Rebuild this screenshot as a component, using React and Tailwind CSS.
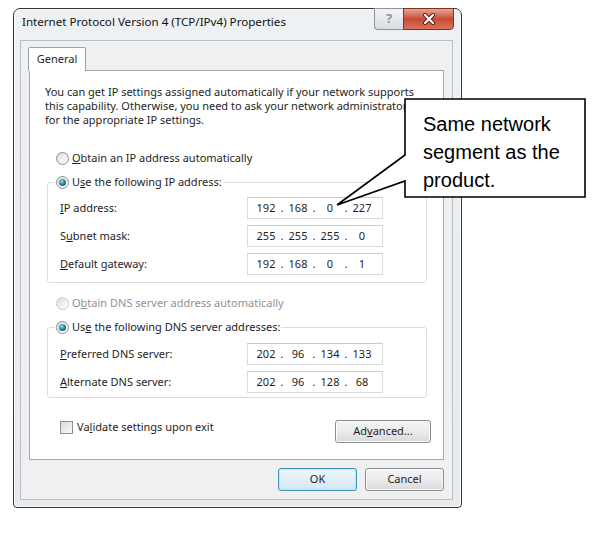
import React from "react";

const ui = "font-['Noto_Sans',sans-serif] text-[11px] text-[#1e1e1e]";

function Radio({ checked, disabled }) {
  return (
    <span
      className={`inline-flex w-[13px] h-[13px] shrink-0 items-center justify-center rounded-full border ${
        disabled ? "border-[#c9cbcd]" : "border-[#8a8d90]"
      } bg-linear-to-br from-[#d6d8da] via-[#f0f0f0] to-[#ffffff]`}
    >
      {checked && (
        <span className="w-[7px] h-[7px] rounded-full bg-[radial-gradient(circle_at_40%_35%,#8fe0f4,#1f7595_55%,#123f57)]" />
      )}
    </span>
  );
}

function IpField({ parts }) {
  return (
    <div className="w-[136px] h-[22px] flex items-center pl-[6px] bg-white border border-[#d9dbdd] border-t-[#c9cbce]">
      {parts.map((p, i) => (
        <React.Fragment key={i}>
          {i > 0 && <span className="w-[8px] text-center">.</span>}
          <span className="w-[24px] text-center">{p}</span>
        </React.Fragment>
      ))}
    </div>
  );
}

function Row({ label, parts }) {
  return (
    <div className="flex items-center pl-[12px]">
      <span className="w-[187px]">{label}</span>
      <IpField parts={parts} />
    </div>
  );
}

function Button({ children, primary, className = "" }) {
  return (
    <div
      className={`h-[23px] flex items-center justify-center rounded-[3px] border ${
        primary
          ? "border-[#3d95c4] bg-linear-to-b from-[#f1f8fc] to-[#d2e6f1] shadow-[inset_0_0_0_1px_#bfe6f8]"
          : "border-[#8a8d90] bg-linear-to-b from-[#f4f4f4] via-[#ebebeb] to-[#d9d9d9] shadow-[inset_0_0_0_1px_#fbfbfb]"
      } ${className}`}
    >
      {children}
    </div>
  );
}

export default function App() {
  return (
    <div className={`relative w-[609px] h-[548px] bg-white overflow-hidden pt-[8px] pl-[13px] ${ui}`}>
      {/* dialog */}
      <div className="relative w-[449px] h-[500px] flex flex-col border border-[#333638] rounded-t-[7px] rounded-b-[4px] bg-linear-to-b from-[#eef1f4] to-[#e8ebee] shadow-[inset_0_0_0_1px_#fafbfc]">
        <div className="h-[31px] pl-[8px] pt-[6px] leading-[14px] text-[11.6px] text-[#111]">
          Internet Protocol Version 4 (TCP/IPv4) Properties
        </div>

        <div className="absolute -top-px right-[7px] flex h-[22px]">
          <div className="w-[29px] flex items-center justify-center rounded-bl-[4px] border border-[#8e959c] border-r-0 bg-linear-to-b from-[#f3f4f6] to-[#d9dde1] font-bold text-[13px] text-[#8a949e]">
            ?
          </div>
          <div className="w-[51px] flex items-center justify-center rounded-br-[4px] border border-[#7a3226] bg-linear-to-b from-[#e6a595] via-[#c64a35] to-[#d9735c]">
            <svg width="14" height="12" viewBox="0 0 14 12">
              <path d="M3 2 L11 10 M11 2 L3 10" stroke="#5b1c12" strokeWidth="4" strokeLinecap="round" />
              <path d="M3 2 L11 10 M11 2 L3 10" stroke="#ffffff" strokeWidth="2.2" strokeLinecap="round" />
            </svg>
          </div>
        </div>

        {/* inner frame */}
        <div className="flex-1 ml-[6px] mr-[8px] mb-[7px] border border-[#b7bec5] bg-[#f0f0f0] pl-[8px] pr-[8px] pt-[6px]">
          <div className="flex">
            <div className="relative z-10 -ml-px -mb-px w-[58px] h-[24px] flex items-center justify-center border border-b-0 border-[#9aa1a9] bg-white rounded-t-[2px]">
              General
            </div>
          </div>

          <div className="h-[390px] border border-[#a3aab2] bg-white pl-[15px] pr-[12px] pt-[14px]">
            <p className="leading-[14px] whitespace-nowrap">
              You can get IP settings assigned automatically if your network supports
              <br />
              this capability. Otherwise, you need to ask your network administrator
              <br />
              for the appropriate IP settings.
            </p>

            <div className="mt-[23px] ml-[11px] h-[16px] flex items-center gap-[3px]">
              <Radio />
              <span>
                <span className="underline">O</span>btain an IP address automatically
              </span>
            </div>

            <fieldset className="mt-[8px] ml-[2px] w-[380px] border border-[#d6dee4] rounded-[3px] pt-[7px] pb-[7px]">
              <legend className="ml-[7px] px-[1px] bg-white">
                <span className="h-[16px] flex items-center gap-[3px]">
                  <Radio checked />
                  <span>
                    U<span className="underline">s</span>e the following IP address:
                  </span>
                </span>
              </legend>
              <div className="flex flex-col gap-[6px]">
                <Row label={<><span className="underline">I</span>P address:</>} parts={["192", "168", "0", "227"]} />
                <Row label={<>S<span className="underline">u</span>bnet mask:</>} parts={["255", "255", "255", "0"]} />
                <Row label={<><span className="underline">D</span>efault gateway:</>} parts={["192", "168", "0", "1"]} />
              </div>
            </fieldset>

            <div className="mt-[12px] ml-[11px] h-[16px] flex items-center gap-[3px] text-[#8f9194]">
              <Radio disabled />
              <span>
                O<span className="underline">b</span>tain DNS server address automatically
              </span>
            </div>

            <fieldset className="mt-[8px] ml-[2px] w-[380px] border border-[#d6dee4] rounded-[3px] pt-[8px] pb-[4px]">
              <legend className="ml-[7px] px-[1px] bg-white">
                <span className="h-[16px] flex items-center gap-[3px]">
                  <Radio checked />
                  <span>
                    Us<span className="underline">e</span> the following DNS server addresses:
                  </span>
                </span>
              </legend>
              <div className="flex flex-col gap-[6px]">
                <Row label={<><span className="underline">P</span>referred DNS server:</>} parts={["202", "96", "134", "133"]} />
                <Row label={<><span className="underline">A</span>lternate DNS server:</>} parts={["202", "96", "128", "68"]} />
              </div>
            </fieldset>

            <div className="mt-[23px] flex items-start justify-between">
              <div className="ml-[15px] h-[13px] flex items-center gap-[4px]">
                <span className="w-[13px] h-[13px] border border-[#8f9296] bg-linear-to-br from-[#d8d9db] to-[#fbfbfb]" />
                <span>
                  Va<span className="underline">l</span>idate settings upon exit
                </span>
              </div>
              <Button className="w-[96px] -mt-px">
                Ad<span className="underline">v</span>anced...
              </Button>
            </div>
          </div>

          <div className="mt-[8px] flex justify-end gap-[8px]">
            <Button primary className="w-[79px]">OK</Button>
            <Button className="w-[79px]">Cancel</Button>
          </div>
        </div>
      </div>

      {/* callout */}
      <svg className="absolute left-0 top-0 pointer-events-none" width="609" height="548">
        <path
          d="M405 99 L585 99 L585 197 L405 197 L405 181 L337 205 L405 155 Z"
          fill="#ffffff"
          stroke="#000000"
          strokeWidth="1.6"
          strokeLinejoin="miter"
        />
      </svg>
      <div className="absolute left-[423px] top-[110px] font-['Liberation_Sans',Arial,sans-serif] text-[20px] leading-[28px] text-black">
        Same network
        <br />
        segment as the
        <br />
        product.
      </div>
    </div>
  );
}
